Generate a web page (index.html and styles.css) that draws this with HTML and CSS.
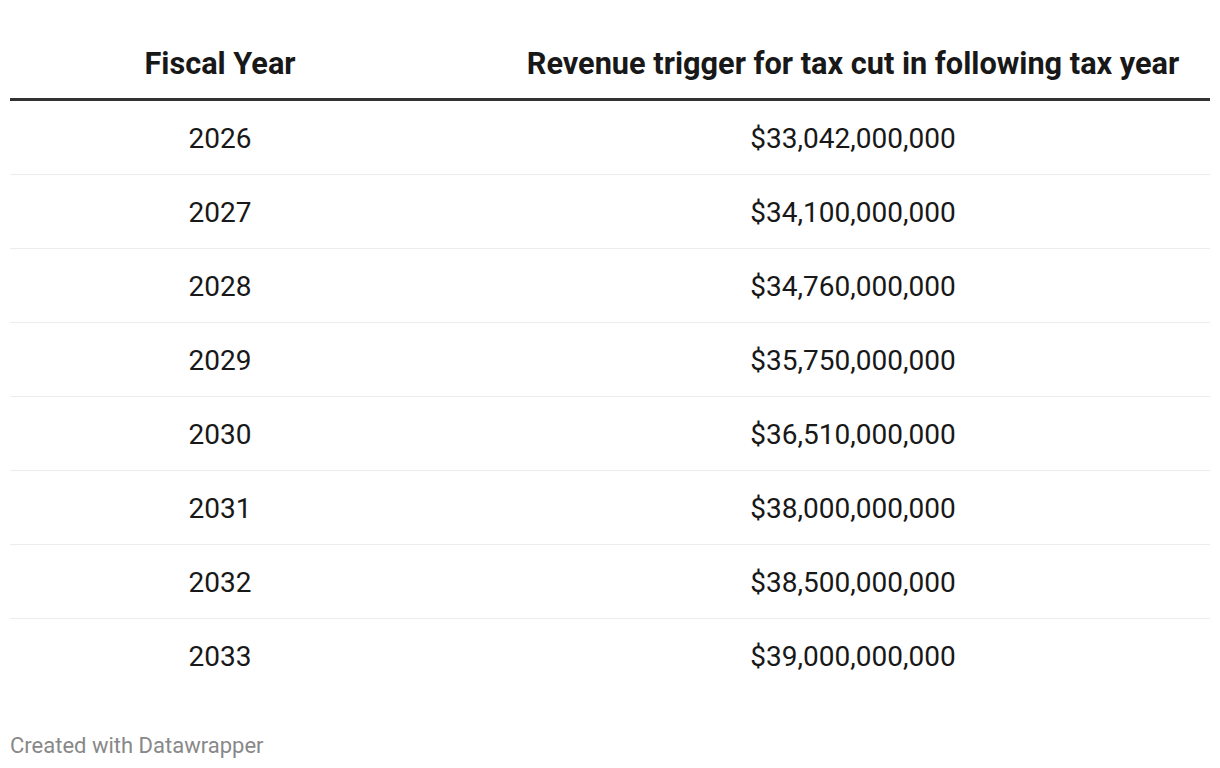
FILE: index.html
```html
<!DOCTYPE html>
<html>
<head>
<meta charset="utf-8">
<link rel="stylesheet" href="styles.css">
</head>
<body>
<div class="wrap">
  <div class="table">
    <div class="row head">
      <div class="cell c1">Fiscal Year</div>
      <div class="cell c2">Revenue trigger for tax cut in following tax year</div>
    </div>
    <div class="row"><div class="cell c1">2026</div><div class="cell c2">$33,042,000,000</div></div>
    <div class="row"><div class="cell c1">2027</div><div class="cell c2">$34,100,000,000</div></div>
    <div class="row"><div class="cell c1">2028</div><div class="cell c2">$34,760,000,000</div></div>
    <div class="row"><div class="cell c1">2029</div><div class="cell c2">$35,750,000,000</div></div>
    <div class="row"><div class="cell c1">2030</div><div class="cell c2">$36,510,000,000</div></div>
    <div class="row"><div class="cell c1">2031</div><div class="cell c2">$38,000,000,000</div></div>
    <div class="row"><div class="cell c1">2032</div><div class="cell c2">$38,500,000,000</div></div>
    <div class="row last"><div class="cell c1">2033</div><div class="cell c2">$39,000,000,000</div></div>
  </div>
  <div class="footer">Created with Datawrapper</div>
</div>
</body>
</html>
```
FILE: styles.css
```css
html, body {
  margin: 0;
  padding: 0;
  background: #fff;
}
body {
  font-family: Roboto, "Liberation Sans", sans-serif;
  color: #181818;
}
.wrap {
  padding: 0 10px;
}
.table {
  display: flex;
  flex-direction: column;
}
.row {
  display: grid;
  grid-template-columns: 420px 1fr;
  height: 73px;
  align-items: center;
  border-bottom: 1px solid #ececec;
  font-size: 28px;
  line-height: 34px;
}
.row .cell {
  padding-top: 2px;
}
.row.last {
  border-bottom: none;
}
.row.head {
  height: 98px;
  align-items: end;
  border-bottom: 3px solid #333;
  font-weight: 700;
  font-size: 30.7px;
  line-height: 36px;
}
.row.head .cell {
  padding-top: 0;
  padding-bottom: 16px;
}
.cell {
  text-align: center;
}
.c2 {
  padding-left: 66px;
}
.footer {
  margin-top: 40px;
  font-size: 22px;
  line-height: 28px;
  color: #888;
}
```
